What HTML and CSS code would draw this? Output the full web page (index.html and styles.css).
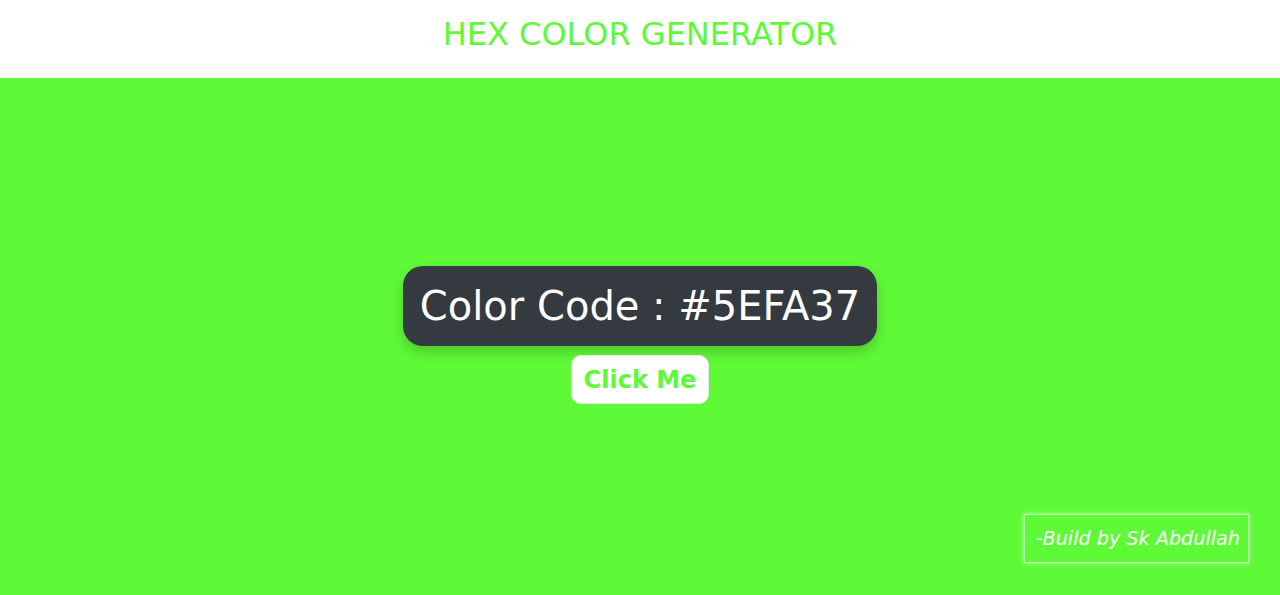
FILE: index.html
```html
<!DOCTYPE html>
<html>
<head>
<meta charset="utf-8">
<link rel="stylesheet" href="styles.css">
</head>
<body>
<header class="topbar">
  <h1 class="title">HEX COLOR GENERATOR</h1>
</header>
<main class="stage">
  <div class="code-box">Color Code : #5EFA37</div>
  <button class="btn">Click Me</button>
  <div class="credit">-Build by Sk Abdullah</div>
</main>
</body>
</html>
```
FILE: styles.css
```css
html, body {
  margin: 0;
  padding: 0;
}
body {
  font-family: "DejaVu Sans", sans-serif;
  height: 595px;
  overflow: hidden;
}
.topbar {
  height: 78px;
  box-sizing: border-box;
  padding-top: 16px;
  background: #ffffff;
  display: flex;
  align-items: flex-start;
  justify-content: center;
}
.title {
  margin: 0;
  font-weight: normal;
  font-size: 32px;
  line-height: 1.164;
  color: #5efa37;
}
.stage {
  position: relative;
  height: 517px;
  box-sizing: border-box;
  padding-bottom: 4px;
  background: #5efa37;
  display: flex;
  flex-direction: column;
  align-items: center;
  justify-content: center;
  gap: 9px;
}
.code-box {
  background: #343a40;
  color: #ffffff;
  font-size: 40px;
  height: 80px;
  padding: 0 17px;
  display: flex;
  align-items: center;
  border-radius: 20px;
  box-shadow: 0 6px 14px rgba(0, 0, 0, 0.2);
}
.btn {
  font-family: "DejaVu Sans", sans-serif;
  font-weight: bold;
  font-size: 24px;
  color: #5efa37;
  background: #ffffff;
  border: 1px solid #e8e8e8;
  border-radius: 10px;
  height: 49px;
  padding: 1px 12px 0;
}
.credit {
  position: absolute;
  right: 31px;
  bottom: 32px;
  height: 49px;
  box-sizing: border-box;
  padding: 0 8px 0 11px;
  display: flex;
  align-items: center;
  border: 1px solid rgba(255, 255, 255, 0.6);
  box-shadow: 0 0 4px rgba(255, 255, 255, 0.7);
  color: #ffffff;
  font-style: italic;
  font-size: 19.2px;
}
```
